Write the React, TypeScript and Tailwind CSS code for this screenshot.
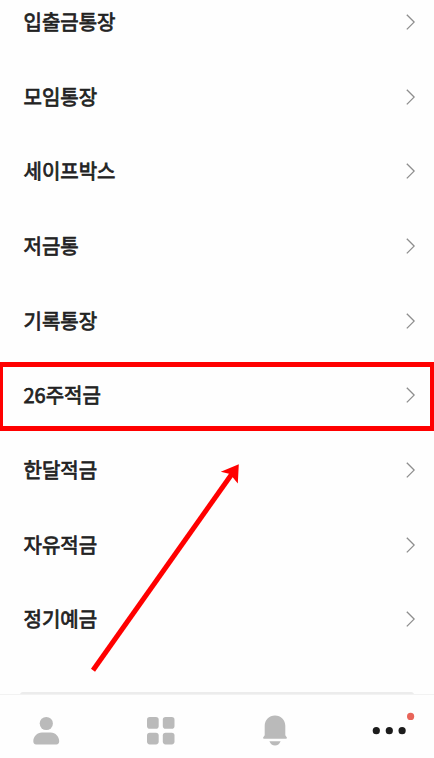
const products = [
  '입출금통장',
  '모임통장',
  '세이프박스',
  '저금통',
  '기록통장',
  '26주적금',
  '한달적금',
  '자유적금',
  '정기예금'
]

const highlighted = '26주적금'

function Chevron() {
  return (
    <svg width="10" height="18" viewBox="0 0 10 18" fill="none" stroke="#8e8e8e" strokeWidth="1.3">
      <path d="M.8 1.8 8.1 9.1.8 16.4" />
    </svg>
  )
}

function ProductRow({ name }: { name: string }) {
  return (
    <li className="relative flex h-[74.7px] items-center justify-between pr-[18px] pl-[23.5px]">
      <span className="text-[20px] leading-[30px] font-normal [-webkit-text-stroke:0.75px_#222]">{name}</span>
      <Chevron />
      {name === highlighted && (
        <div className="absolute inset-x-0 top-[3.8px] h-[69px] border-y-5 border-r-4 border-l-3 border-[#ff0000]" />
      )}
    </li>
  )
}

function PersonIcon() {
  return (
    <svg width="28" height="32" viewBox="0 0 28 32" fill="#bababa">
      <circle cx="14.3" cy="9.5" r="6.6" />
      <path d="M10 18.6h8.6c5 0 8.6 4.3 8.6 8.7 0 2-.9 3.1-2.9 3.1H4.2c-2 0-2.9-1.1-2.9-3.1 0-4.4 3.7-8.7 8.7-8.7Z" />
    </svg>
  )
}

function GridIcon() {
  return (
    <svg width="28" height="32" viewBox="0 0 28 32" fill="#bababa">
      <rect x="0" y="3" width="11.7" height="11.7" rx="2.8" />
      <rect x="15.8" y="3" width="11.7" height="11.7" rx="2.8" />
      <rect x="0" y="18.7" width="11.7" height="11.7" rx="2.8" />
      <rect x="15.8" y="18.7" width="11.7" height="11.7" rx="2.8" />
    </svg>
  )
}

function BellIcon() {
  return (
    <svg width="28" height="32" viewBox="0 0 28 32" fill="#bababa">
      <path d="M14 1.5c5.9 0 10.3 4.6 10.3 10.2v9.6l1.4 2c.5.8.2 1.4-.7 1.4H3c-.9 0-1.2-.6-.7-1.4l1.4-2v-9.6C3.7 6.1 8.1 1.5 14 1.5Z" />
      <path d="M8.4 27.2h11.2c-1 2.7-3 4.4-5.6 4.4s-4.6-1.7-5.6-4.4Z" />
    </svg>
  )
}

function MoreIcon() {
  return (
    <svg width="46" height="36" viewBox="0 0 46 36" fill="#1c1c1c">
      <circle cx="6.3" cy="20.7" r="3.6" />
      <circle cx="19.3" cy="20.7" r="3.6" />
      <circle cx="32.1" cy="20.7" r="3.6" />
      <circle cx="40.6" cy="6.4" r="3.6" fill="#e86459" />
    </svg>
  )
}

export default function App() {
  return (
    <div className="relative flex h-[758px] w-[434px] flex-col overflow-hidden bg-[#fefefe] font-['Noto_Sans_CJK_KR','Noto_Sans',sans-serif] text-[#222]">
      <ul className="-mt-[15.5px] h-[707.5px] shrink-0">
        {products.map((name) => (
          <ProductRow key={name} name={name} />
        ))}
      </ul>

      <div className="mx-[20px] h-[3px] shrink-0 rounded-t-[8px] bg-[#ececec]" />

      <nav className="-mt-px flex flex-1 items-start border-t border-[#f2f2f2] pt-[19px] pl-[32px]">
        <button className="mr-[87px]"><PersonIcon /></button>
        <button className="mr-[86px]"><GridIcon /></button>
        <button className="mr-[81px]"><BellIcon /></button>
        <button className="-mt-[4px] shrink-0"><MoreIcon /></button>
      </nav>

      {/* arrow pointing at the highlighted row */}
      <svg className="pointer-events-none absolute inset-0" width="434" height="758" viewBox="0 0 434 758">
        <path d="M93 670.3 234 471" stroke="#ff0000" strokeWidth="5" />
        <path d="M238.8 464.3 220.8 471.8 230 474 237.8 483.5Z" fill="#ff0000" />
      </svg>
    </div>
  )
}
